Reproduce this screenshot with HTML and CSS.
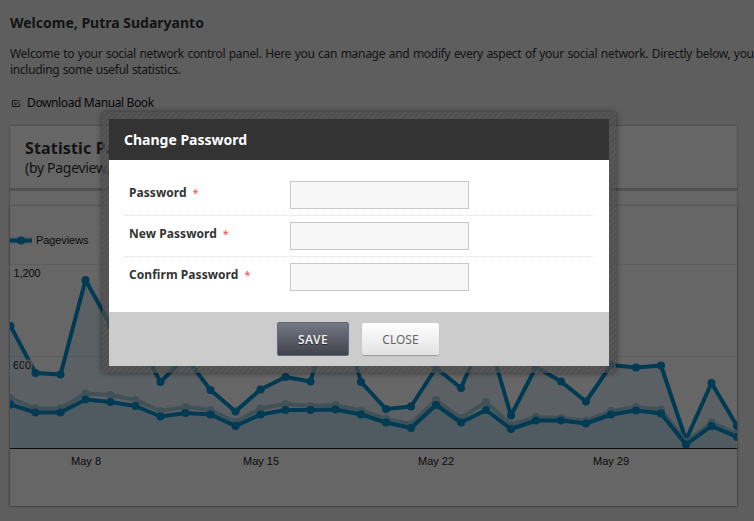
FILE: index.html
```
<!DOCTYPE html>
<html lang="en">
<head>
<meta charset="utf-8">
<title>Control Panel</title>
<link rel="stylesheet" href="styles.css">
</head>
<body>
<main class="page">
  <h1 class="welcome"><span>Welcome, Putra Sudaryanto</span></h1>
  <p class="intro"><span class="intro-a">Welcome to your social network control panel. Here you can manage and modify every aspect of your social network. Directly below, you</span><br><span class="intro-b">including some useful statistics.</span></p>
  <a class="download"><svg width="9" height="9" viewBox="0 0 9 9" fill="none" stroke="#333" stroke-width="1"><path d="M5.500 1.500H.5v6h7V4.500M3 3.200v2.300h1.200L8 1.400"/></svg><span>Download Manual Book</span></a>
  <section class="panel">
    <header class="panel-head"><h2><span>Statistic Page</span></h2><p>(by Pageview, Visit)</p></header>
    <div class="chart">
      <svg width="727" height="300" viewBox="10 206 727 300">
        <path class="grid" d="M10 264.5H737M10 356.5H737"/>
        <path class="area" d="M10.5 448V326L35.5 373L60.5 374.5L85.5 280L110.5 325L135.5 335L160.5 382L185.5 357L210.5 390L235.5 411.5L260.5 389.5L285.5 377L310.5 381.5L335.5 290L360.5 382L385.5 409L410.5 406.5L435.5 368L460.5 388L485.5 330L510.5 415.5L535.5 367L560.5 381.5L585.5 401.5L610.5 365L635.5 367.5L660.5 365.5L685.5 440L710.5 383L736.5 426V448Z"/>
        <path class="area" d="M10.5 448V404.5L35.5 412.5H60.5L85.5 399.5L110.5 402L135.5 406L160.5 416.5L185.5 413L210.5 414.5L235.5 426L260.5 414.5L285.5 410H310.5L335.5 409.5L360.5 414.5L385.5 422.5L410.5 428L435.5 405L460.5 422.5L485.5 410L510.5 429L535.5 420.5H560.5L585.5 423.5L610.5 414.5L635.5 410.5L660.5 413.5L685.5 444.5L710.5 426L736.5 437V448Z"/>
        <polyline class="line" points="10.5,326 35.5,373 60.5,374.5 85.5,280 110.5,325 135.5,335 160.5,382 185.5,357 210.5,390 235.5,411.5 260.5,389.5 285.5,377 310.5,381.5 335.5,290 361,382 386,409 411,406.5 436,368 461,388 486,330 511,415.5 536,367 561,381.5 586,401.5 611,365 636,367.5 661,365.5 686,440 711.5,383 737,426"/>
        <polyline class="line light" points="10.5,398 35.5,408.5 60.5,408.5 85.5,393.5 110.5,395 135.5,400 160.5,411 185.5,407 210.5,410 235.5,422 260.5,408.5 285.5,404 310.5,406 335.5,405 361,410.5 386,419 411,424 436,400 461,418 486,402 511,425 536,417 561,418 586,420.5 611,411 636,407 661,409.5 686,442 711.5,422.5 737,434"/>
        <polyline class="line" points="10.5,404.5 35.5,412.5 60.5,412.5 85.5,399.5 110.5,402 135.5,406 160.5,416.5 185.5,413 210.5,414.5 235.5,426 260.5,414.5 285.5,410 310.5,410 335.5,409.5 361,414.5 386,422.5 411,428 436,405 461,422.5 486,410 511,429 536,420.5 561,420.5 586,423.5 611,414.5 636,410.5 661,413.5 686,444.5 711.5,426 737,437"/>
        <path class="axis" d="M10 448.5H737"/>
        <path class="swatch" d="M10 240.5H32"/><path class="line" d="M10 240.5H32"/><circle class="dot" cx="21" cy="240.5" r="4"/>
        <g class="labels">
          <text x="36" y="244" textLength="52.5">Pageviews</text>
          <text x="13.5" y="277" textLength="27">1,200</text>
          <text class="halo" x="13" y="369" textLength="18">600</text>
          <text x="71" y="465" textLength="30">May 8</text>
          <text x="243" y="465" textLength="36">May 15</text>
          <text x="418" y="465" textLength="36">May 22</text>
          <text x="593" y="465" textLength="36">May 29</text>
        </g>
      </svg>
    </div>
  </section>
</main>
<div class="overlay">
  <form class="frame">
    <div class="dialog">
      <h3><span>Change Password</span></h3>
      <div class="fields">
        <label class="row"><span class="name"><b>Password</b><i>*</i></span><input type="password"></label>
        <label class="row"><span class="name"><b>New Password</b><i>*</i></span><input type="password"></label>
        <label class="row"><span class="name"><b>Confirm Password</b><i>*</i></span><input type="password"></label>
      </div>
      <footer><button type="button" class="save">SAVE</button><button type="button" class="close">CLOSE</button></footer>
    </div>
  </form>
</div>
<script src="chart.js"></script>
</body>
</html>
```
FILE: styles.css
```
* { box-sizing: border-box; }
body { margin: 0; height: 521px; overflow: hidden; background: #ebebeb; color: #333; font: 12px/16px "Noto Sans", sans-serif; }
h1, h2, h3, p { margin: 0; }
.page { width: 754px; padding: 14px 0 0 10px; }
.welcome { font-size: 14px; line-height: 18px; white-space: nowrap; }
.intro { margin-top: 14px; white-space: nowrap; }
.intro-a { letter-spacing: -.3px; word-spacing: .75px; }
.intro-b { letter-spacing: -.3px; word-spacing: .5px; }
.download { display: flex; align-items: center; gap: 6px; margin-top: 17px; padding-left: 2px; line-height: 16px; color: #111; letter-spacing: -.38px; }
.panel { width: 727px; height: 380px; margin-top: 15px; background: #fff; box-shadow: 0 0 2px rgba(0,0,0,.4); }
.panel-head { height: 65px; padding: 12px 15px 0; border-bottom: 3px solid #ccc; }
.panel-head h2 { font-size: 16px; line-height: 20px; letter-spacing: .15px; }
.panel-head p { font-size: 14px; line-height: 20px; letter-spacing: -.3px; }
.chart { height: 300px; margin-top: 15px; box-shadow: 0 0 2px rgba(0,0,0,.4); }
.chart svg { display: block; }
.grid { stroke: #ebebeb; }
.area { fill: #058dc7; fill-opacity: .12; }
.line { fill: none; stroke: #0092d0; stroke-width: 4; stroke-linejoin: round; }
.light { stroke: #a4cadd; }
.dot { fill: #0092d0; }
.dot.pale { fill: #a4cadd; }
.swatch { stroke: #e0f0f8; stroke-width: 8; }
.axis { stroke: #222; }
.labels { font: 11px "Liberation Sans", Arial, sans-serif; fill: #222; }
.halo { stroke: #e2eff5; stroke-width: 3; paint-order: stroke; }
.overlay { position: fixed; inset: 0; background: rgba(0,0,0,.6); padding: 112px 0 0 102px; }
.frame { width: 514px; padding: 7px; border-radius: 3px; background: repeating-linear-gradient(135deg, rgba(72,72,72,.7) 0 2px, rgba(80,80,80,.7) 2px 4px); box-shadow: 0 0 6px rgba(0,0,0,.5); }
.dialog { height: 247px; background: #fff; }
.dialog h3 { height: 41px; padding-left: 15px; background: #333; color: #fff; font-size: 14px; line-height: 41px; }
.fields { height: 152px; padding: 15px 15px 0; }
.row { display: flex; height: 41px; padding: 6px 5px 0; border-bottom: 1px dotted #dcdcdc; }
.row:last-child { border-bottom: 0; }
.name { width: 161px; line-height: 24px; font-size: 12px; letter-spacing: .05px; }
.name b { margin-right: 6px; }
.name i { font-style: normal; font-size: 11px; color: #f44; }
input { width: 179px; height: 28px; border: 1px solid #c8c8c8; background: #f7f7f7; padding: 0; }
footer { height: 54px; padding: 10px 2px 0 0; background: #ccc; display: flex; justify-content: center; gap: 13px; }
button { height: 34px; padding: 0; border-radius: 2px; font: 12px "Noto Sans", sans-serif; }
.save { width: 72px; border: 1px solid #626775; background: linear-gradient(#757985, #41424a); color: #eee; font-weight: 600; letter-spacing: .4px; text-shadow: 0 1px 1px #222; }
.close { width: 77px; height: 32px; margin-top: 1px; border: 0; background: linear-gradient(#fff, #e2e2e2); color: #666; box-shadow: 0 1px 1px #999; }
```
FILE: chart.js
```
// Put a round marker on every vertex of each series.
document.querySelectorAll('polyline.line').forEach(function (line) {
  var pale = line.classList.contains('light');
  var last = line;
  line.getAttribute('points').split(' ').forEach(function (p) {
    var xy = p.split(',');
    var c = document.createElementNS('http://www.w3.org/2000/svg', 'circle');
    c.setAttribute('cx', xy[0]);
    c.setAttribute('cy', xy[1]);
    c.setAttribute('r', 4);
    c.setAttribute('class', pale ? 'dot pale' : 'dot');
    last.after(c);
    last = c;
  });
});
```
